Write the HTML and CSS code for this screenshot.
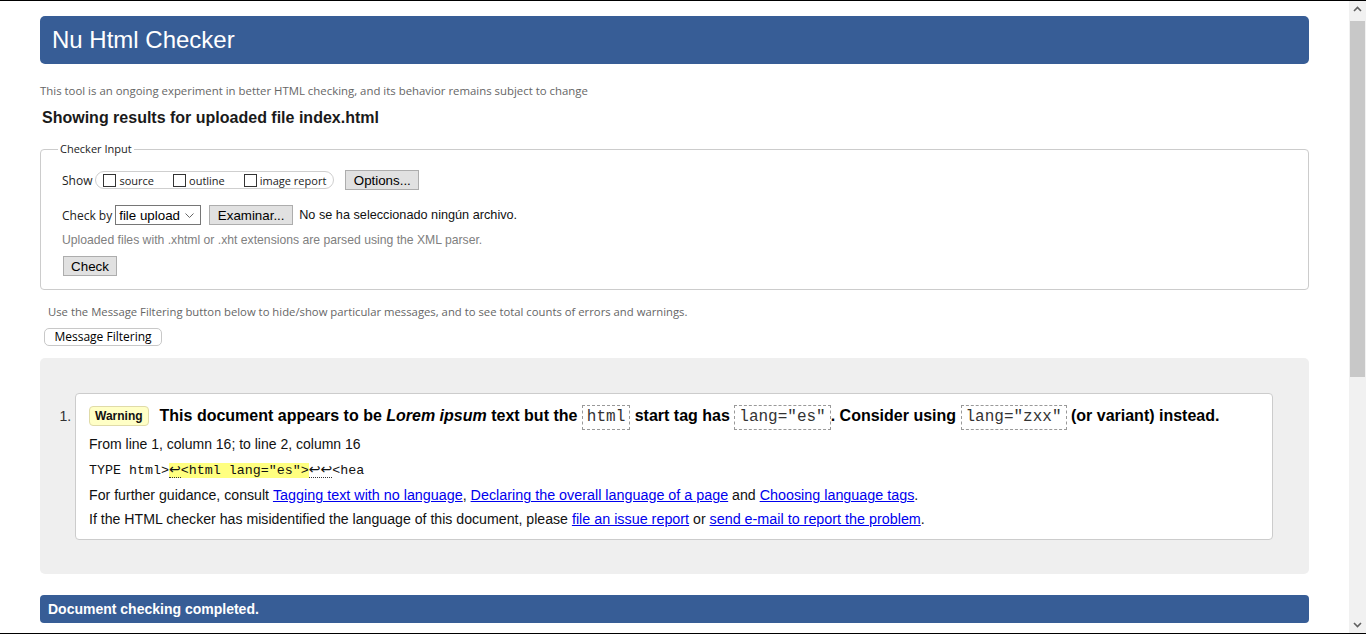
FILE: index.html
```html
<!DOCTYPE html>
<html lang="en">
<head>
<meta charset="utf-8">
<title>Nu Html Checker</title>
<link rel="stylesheet" href="styles.css">
</head>
<body>
<div class="screen">
  <div class="page">
    <h1 class="banner">Nu Html Checker</h1>
    <p class="tagline">This tool is an ongoing experiment in better HTML checking, and its behavior remains subject to change</p>
    <h2 class="results-title">Showing results for uploaded file index.html</h2>

    <fieldset class="checker">
      <legend class="checker-legend">Checker Input</legend>
      <div class="row row-show">
        <span class="lbl">Show</span>
        <span class="pill">
          <label class="opt"><input type="checkbox" class="cb"><span>source</span></label>
          <label class="opt"><input type="checkbox" class="cb"><span>outline</span></label>
          <label class="opt last"><input type="checkbox" class="cb"><span>image report</span></label>
        </span>
        <button class="btn btn-options" type="button">Options...</button>
      </div>
      <div class="row row-checkby">
        <span class="lbl">Check by</span>
        <select class="sel"><option>file upload</option></select>
        <button class="btn btn-browse" type="button">Examinar...</button>
        <span class="file-none">No se ha seleccionado ningún archivo.</span>
      </div>
      <p class="hint">Uploaded files with .xhtml or .xht extensions are parsed using the XML parser.</p>
      <div class="row row-check">
        <button class="btn btn-check" type="button">Check</button>
      </div>
    </fieldset>

    <p class="filter-note">Use the Message Filtering button below to hide/show particular messages, and to see total counts of errors and warnings.</p>
    <button class="btn-filter" type="button">Message Filtering</button>

    <div class="results">
      <ol class="messages">
        <li class="msg">
          <p class="msg-head"><span class="badge">Warning</span>This document appears to be <em>Lorem ipsum</em> text but the <code class="c">html</code> start tag has <code class="c">lang="es"</code>. Consider using <code class="c">lang="zxx"</code> (or variant) instead.</p>
          <p class="loc">From line 1, column 16; to line 2, column 16</p>
          <p class="extract">TYPE html&gt;<span class="hl"><span class="lf">↩</span>&lt;html lang="es"&gt;</span><span class="lf">↩↩</span>&lt;hea</p>
          <p class="info">For further guidance, consult <a href="#">Tagging text with no language</a>, <a href="#">Declaring the overall language of a page</a> and <a href="#">Choosing language tags</a>.</p>
          <p class="info">If the HTML checker has misidentified the language of this document, please <a href="#">file an issue report</a> or <a href="#">send e-mail to report the problem</a>.</p>
        </li>
      </ol>
    </div>

    <p class="done">Document checking completed.</p>
  </div>

  <div class="scrollbar">
    <div class="sb-arrow"><svg width="17" height="17" viewBox="0 0 17 17"><polyline points="5,10 8.5,6.5 12,10" fill="none" stroke="#606060" stroke-width="1.6"/></svg></div>
    <div class="sb-thumb"></div>
    <div class="sb-rest"></div>
    <div class="sb-arrow"><svg width="17" height="17" viewBox="0 0 17 17"><polyline points="5,7 8.5,10.5 12,7" fill="none" stroke="#606060" stroke-width="1.6"/></svg></div>
  </div>
</div>
</body>
</html>
```

FILE: styles.css
```css
html, body {
  margin: 0;
  padding: 0;
  background: #fff;
}

body {
  font-family: "Liberation Sans", Arial, sans-serif;
  color: #000;
}

.screen {
  height: 634px;
  box-sizing: border-box;
  border-top: 1px solid #000;
  border-bottom: 1px solid #000;
  display: flex;
  overflow: hidden;
}

.page {
  flex: 1;
  padding: 0 40px;
  min-width: 0;
}

/* Banner */
.banner {
  margin: 15px 0 0;
  height: 48px;
  line-height: 48px;
  padding: 0 0 0 12px;
  background: #375d96;
  color: #fff;
  font-family: "Liberation Sans", Arial, sans-serif;
  font-weight: normal;
  font-size: 24px;
  border-radius: 5px;
}

.tagline {
  margin: 19px 0 0;
  font-family: "Open Sans", "Noto Sans", sans-serif;
  font-size: 11.4px;
  line-height: 16px;
  color: #666;
}

.results-title {
  margin: 9px 0 0 2px;
  font-family: "Liberation Sans", Arial, sans-serif;
  font-size: 16px;
  line-height: 20px;
  font-weight: bold;
  color: #1a1a1a;
}

/* Fieldset */
.checker {
  margin: 14px 0 0;
  padding: 0 20px 13px 21px;
  border: 1px solid #cccccc;
  border-radius: 4px;
  min-inline-size: 0;
}

.checker-legend {
  margin-left: -4px;
  padding: 0 2px;
  font-family: "Open Sans", "Noto Sans", sans-serif;
  font-size: 11px;
  line-height: 14px;
  color: #222;
}

.row {
  display: flex;
  align-items: center;
}

.row-show {
  margin-top: 14px;
  height: 20px;
}

.lbl {
  font-family: "Open Sans", "Noto Sans", sans-serif;
  font-size: 12px;
  color: #222;
}

.pill {
  display: flex;
  align-items: center;
  height: 18px;
  box-sizing: border-box;
  margin-left: 3px;
  padding: 0 7px;
  border: 1px solid #cfcfcf;
  border-radius: 9px;
}

.opt {
  display: flex;
  align-items: center;
  margin-right: 19px;
  font-family: "Open Sans", "Noto Sans", sans-serif;
  font-size: 11px;
  color: #222;
}

.opt.last {
  margin-right: 0;
}

.cb {
  appearance: none;
  -webkit-appearance: none;
  width: 13px;
  height: 13px;
  margin: 0 3px 0 0;
  border: 1px solid #333;
  background: #fff;
  box-sizing: border-box;
}

.btn {
  height: 20px;
  box-sizing: border-box;
  padding: 0 7px;
  border: 1px solid #adadad;
  background: #e1e1e1;
  font-family: "Liberation Sans", Arial, sans-serif;
  font-size: 13.33px;
  color: #000;
  border-radius: 0;
}

.btn-options {
  margin-left: 11px;
  width: 74px;
}

.row-checkby {
  margin-top: 15px;
  height: 20px;
}

.sel {
  appearance: none;
  -webkit-appearance: none;
  margin-left: 3px;
  width: 86px;
  height: 20px;
  box-sizing: border-box;
  padding: 0 0 0 3px;
  border: 1px solid #767676;
  border-radius: 0;
  background: #fff url("data:image/svg+xml,%3Csvg xmlns='http://www.w3.org/2000/svg' width='9' height='5' viewBox='0 0 9 5'%3E%3Cpolyline points='0.5,0.5 4.5,4.5 8.5,0.5' fill='none' stroke='%23666' stroke-width='1'/%3E%3C/svg%3E") no-repeat right 6px center;
  font-family: "Liberation Sans", Arial, sans-serif;
  font-size: 13.33px;
  color: #000;
}

.btn-browse {
  margin-left: 8px;
  width: 84px;
}

.file-none {
  margin-left: 6px;
  font-family: "Liberation Sans", Arial, sans-serif;
  font-size: 12.7px;
  color: #111;
}

.hint {
  margin: 7px 0 0;
  font-family: "Liberation Sans", Arial, sans-serif;
  font-size: 12.2px;
  line-height: 16px;
  color: #808080;
}

.row-check {
  margin-top: 8px;
}

.btn-check {
  margin-left: 1px;
  width: 54px;
}

/* Filter */
.filter-note {
  margin: 14px 0 0 8px;
  font-family: "Open Sans", "Noto Sans", sans-serif;
  font-size: 11.3px;
  line-height: 16px;
  color: #666;
}

.btn-filter {
  display: block;
  margin: 8px 0 0 4px;
  height: 18px;
  width: 118px;
  box-sizing: border-box;
  padding: 0;
  border: 1px solid #c8c8c8;
  border-radius: 5px;
  background: #fff;
  font-family: "Open Sans", "Noto Sans", sans-serif;
  font-size: 12px;
  line-height: 16px;
  color: #000;
}

/* Results */
.results {
  margin-top: 12px;
  padding: 35px 36px 34px 35px;
  background: #efefef;
  border-radius: 5px;
}

.messages {
  margin: 0;
  padding: 0;
  list-style: decimal outside;
  font-family: "Liberation Sans", Arial, sans-serif;
  font-size: 14px;
  color: #222;
}

.msg {
  background: #fff;
  border: 1px solid #cccccc;
  border-radius: 4px;
  padding: 9px 13px 11px 13px;
}

.msg::marker {
  color: #333;
}

.msg-head {
  margin: 0;
  font-size: 16px;
  font-weight: bold;
  line-height: 25px;
  color: #000;
}

.badge {
  display: inline-block;
  vertical-align: 1px;
  margin-right: 11px;
  padding: 0 5px;
  height: 20px;
  box-sizing: border-box;
  line-height: 18px;
  border: 1px solid #e0dba8;
  border-radius: 4px;
  background: #ffffc6;
  font-size: 12px;
  font-weight: bold;
  color: #111;
}

.c {
  font-family: "Liberation Mono", "Courier New", monospace;
  font-size: 16px;
  font-weight: normal;
  color: #333;
  padding: 2px 4px 3px;
  border: 1px dashed #999;
}

.loc {
  margin: 5px 0 0;
  line-height: 18px;
  color: #111;
}

.extract {
  margin: 9px 0 0;
  font-family: "Liberation Mono", "Courier New", monospace;
  font-size: 13.33px;
  line-height: 18px;
  color: #111;
  white-space: pre;
}

.hl {
  background: #ffff80;
}

.lf {
  font-family: "DejaVu Sans", sans-serif;
  font-size: 14px;
  line-height: 14px;
  border-bottom: 1px dotted #333;
}

.info {
  margin: 6px 0 0;
  font-size: 14.15px;
  line-height: 18px;
  color: #111;
}

.info a {
  font-size: 14.35px;
  color: #0000ee;
  text-decoration: underline;
}

/* Done bar */
.done {
  margin: 21px 0 0;
  height: 28px;
  line-height: 28px;
  padding-left: 8px;
  background: #375d96;
  color: #fff;
  border-radius: 4px;
  font-family: "Liberation Sans", Arial, sans-serif;
  font-weight: bold;
  font-size: 14px;
}

/* Scrollbar */
.scrollbar {
  width: 17px;
  flex: 0 0 17px;
  background: #f1f1f1;
  display: flex;
  flex-direction: column;
}

.sb-arrow {
  height: 17px;
  flex: 0 0 17px;
  display: flex;
}

.sb-thumb {
  margin: 3px 1px 0 1px;
  height: 356px;
  flex: 0 0 356px;
  background: #c8c8c8;
}

.sb-rest {
  flex: 1;
}
```
